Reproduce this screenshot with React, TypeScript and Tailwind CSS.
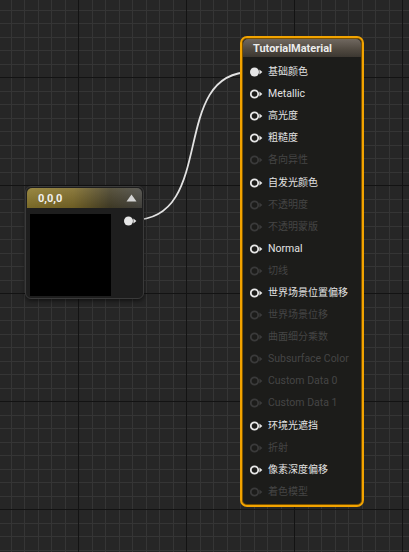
import React from 'react';

type Pin = { label: string; on: boolean };

const pins: Pin[] = [
  { label: '基础颜色', on: true },
  { label: 'Metallic', on: true },
  { label: '高光度', on: true },
  { label: '粗糙度', on: true },
  { label: '各向异性', on: false },
  { label: '自发光颜色', on: true },
  { label: '不透明度', on: false },
  { label: '不透明蒙版', on: false },
  { label: 'Normal', on: true },
  { label: '切线', on: false },
  { label: '世界场景位置偏移', on: true },
  { label: '世界场景位移', on: false },
  { label: '曲面细分乘数', on: false },
  { label: 'Subsurface Color', on: false },
  { label: 'Custom Data 0', on: false },
  { label: 'Custom Data 1', on: false },
  { label: '环境光遮挡', on: true },
  { label: '折射', on: false },
  { label: '像素深度偏移', on: true },
  { label: '着色模型', on: false },
];

const font = { fontFamily: 'Roboto, "Noto Sans CJK SC", sans-serif' };

const PinIcon = ({ on, filled }: { on: boolean; filled?: boolean }) => {
  const c = on ? '#e6e6e6' : '#3a3a3a';
  return (
    <svg width="13" height="10" viewBox="0 0 13 10" className="shrink-0">
      {filled ? (
        <circle cx="4.5" cy="5" r="4.5" fill={c} />
      ) : (
        <circle cx="4.5" cy="5" r="3.7" fill="none" stroke={c} strokeWidth="1.8" />
      )}
      <path d="M9.4 2.6 L12.4 5 L9.4 7.4 Z" fill={c} />
    </svg>
  );
};

const Grid = () => (
  <svg width="409" height="552" className="absolute inset-0">
    <defs>
      <pattern id="g" x="-30" y="-31" width="108" height="108" patternUnits="userSpaceOnUse">
        {[1, 2, 3, 4, 5, 6, 7].map(i => (
          <g key={i}>
            <rect x={Math.round(i * 13.5)} y="0" width="1" height="108" fill="#353535" />
            <rect x="0" y={Math.round(i * 13.5)} width="108" height="1" fill="#353535" />
          </g>
        ))}
        <rect x="0" y="0" width="1" height="108" fill="#131313" />
        <rect x="0" y="0" width="108" height="1" fill="#131313" />
      </pattern>
    </defs>
    <rect width="409" height="552" fill="#262626" />
    <rect width="409" height="552" fill="url(#g)" />
  </svg>
);

const isCjk = (s: string) => /[\u4e00-\u9fff]/.test(s);

export default function App() {
  return (
    <div className="relative w-[409px] h-[552px] overflow-hidden bg-[#262626]" style={font}>
      <Grid />

      {/* wire */}
      <svg width="409" height="552" className="absolute inset-0">
        <path d="M133 220 C 218 220, 168 72, 251 72" fill="none" stroke="#e2e2e2" strokeWidth="1.8" />
      </svg>

      {/* constant node */}
      <div className="absolute left-[25px] top-[186px] w-[119px] h-[113px] rounded-[6px] border border-[#3a3a3a] bg-[#1e1e1e] shadow-[0_2px_4px_rgba(0,0,0,0.5)] p-[1px]">
        <div className="flex items-center justify-between h-[20px] rounded-t-[5px] pl-[11px] pr-[5px] bg-[linear-gradient(180deg,rgba(255,255,255,0.1),rgba(0,0,0,0.15)),linear-gradient(90deg,#8e7b2e_0%,#806d2a_40%,#48422a_72%,#4a4944_100%)]">
          <span className="text-[11px] font-bold text-[#f0f0f0] leading-none">0,0,0</span>
          <svg width="11" height="8" viewBox="0 0 11 8">
            <path d="M5.5 0.5 L10.5 7.5 L0.5 7.5 Z" fill="#d4d4d4" />
          </svg>
        </div>
        <div className="flex items-start pl-[3px] pt-[6px]">
          <div className="w-[81px] h-[82px] bg-black" />
          <div className="ml-[13px] mt-[2px]">
            <PinIcon on filled />
          </div>
        </div>
      </div>

      {/* material result node */}
      <div className="absolute left-[240px] top-[36px] w-[124px] h-[471px] rounded-[7px] border-2 border-[#f2a300] bg-[#1c1c1a] p-[1px] shadow-[inset_0_0_0_1px_#7a5200]">
        <div className="h-[18px] rounded-t-[5px] pl-[10px] flex items-center bg-[linear-gradient(180deg,#706860_0%,#524b42_55%,#3c3731_100%)]">
          <span className="text-[11px] font-bold text-[#ececec] leading-none">TutorialMaterial</span>
        </div>
        <div className="flex flex-col pt-[4px]">
          {pins.map((p, i) => (
            <div key={p.label} className="flex items-center h-[22.1px] pl-[7px] gap-[5px]">
              <PinIcon on={p.on} filled={i === 0} />
              <span
                className={`leading-none whitespace-nowrap ${isCjk(p.label) ? 'text-[10px]' : 'text-[10.5px]'} ${
                  p.on ? 'text-[#e2e2e2]' : 'text-[#454545]'
                }`}
              >
                {p.label}
              </span>
            </div>
          ))}
        </div>
      </div>
    </div>
  );
}
